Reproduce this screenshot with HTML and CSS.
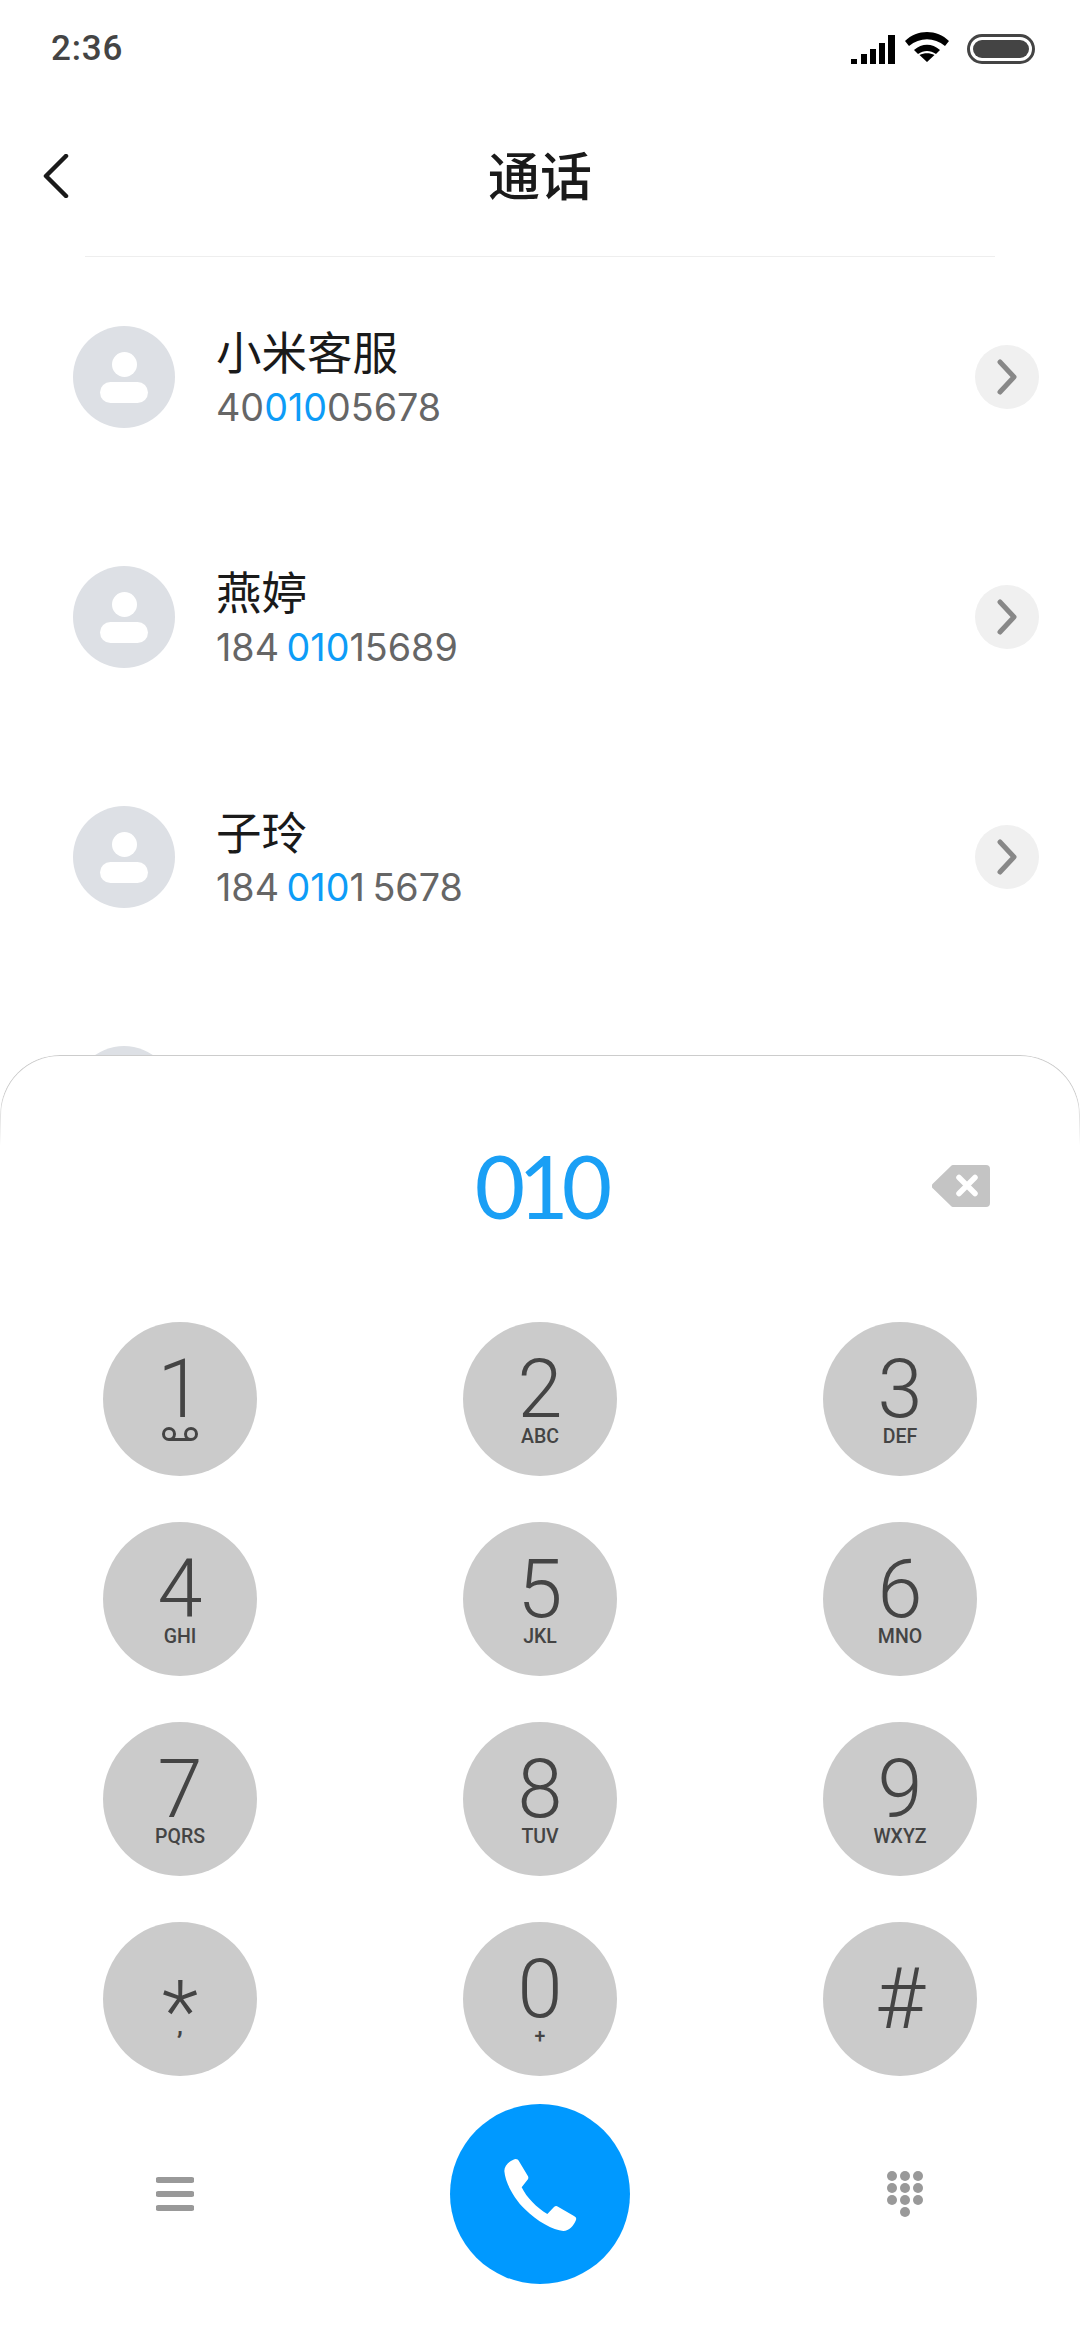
FILE: index.html
```html
<!DOCTYPE html>
<html lang="zh">
<head><meta charset="utf-8"><title>通话</title><link rel="stylesheet" href="styles.css"></head>
<body>
<div class="phone">
  <header class="status">
    <span class="time">2:36</span>
    <div class="status-icons">
      <svg class="i-signal" viewBox="0 0 44 29"><path d="M0 24h6v5H0zM10 19h6v10h-6zM19 14h6v15h-6zM28 8h6v21h-6zM37 0h7v29h-7z" fill="#000"/></svg>
      <svg class="i-wifi" viewBox="0 0 44 30"><path d="M0 9C12-3 32-3 44 9l-4 5C29 5 15 5 4 14z M9 18c8-7 18-7 26 0l-4 4c-6-4-12-4-18 0z M14.500 23c4.500-2.500 10.500-2.500 15 0L22 30z" fill="#000"/></svg>
      <svg class="i-batt" viewBox="0 0 68 30"><rect x="1.500" y="1.500" width="65" height="27" rx="13.500" fill="none" stroke="#444" stroke-width="3"/><rect x="6" y="6" width="56" height="18" rx="9" fill="#444"/></svg>
    </div>
  </header>
  <nav class="titlebar">
    <svg class="back" viewBox="0 0 26 44"><path d="M23 2 3 22l20 20" fill="none" stroke="#1a1a1a" stroke-width="4.500" stroke-linecap="round" stroke-linejoin="round"/></svg>
    <h1>通话</h1>
  </nav>
  <div class="rule"></div>
  <main class="list">
    <div class="row"><div class="avatar"><svg viewBox="0 0 102 102"><circle cx="51.500" cy="38.500" r="12.500" fill="#fff"/><rect x="27" y="56" width="48" height="21" rx="10.500" fill="#fff"/></svg></div>
      <div class="info"><div class="name">小米客服</div><div class="num">40<em>010</em>05678</div></div>
      <div class="go"><svg viewBox="0 0 20 36"><path d="M3 3l14 15L3 33" fill="none" stroke="#888" stroke-width="5" stroke-linecap="round" stroke-linejoin="round"/></svg></div></div>
    <div class="row"><div class="avatar"><svg viewBox="0 0 102 102"><circle cx="51.500" cy="38.500" r="12.500" fill="#fff"/><rect x="27" y="56" width="48" height="21" rx="10.500" fill="#fff"/></svg></div>
      <div class="info"><div class="name">燕婷</div><div class="num">184 <em>010</em>15689</div></div>
      <div class="go"><svg viewBox="0 0 20 36"><path d="M3 3l14 15L3 33" fill="none" stroke="#888" stroke-width="5" stroke-linecap="round" stroke-linejoin="round"/></svg></div></div>
    <div class="row"><div class="avatar"><svg viewBox="0 0 102 102"><circle cx="51.500" cy="38.500" r="12.500" fill="#fff"/><rect x="27" y="56" width="48" height="21" rx="10.500" fill="#fff"/></svg></div>
      <div class="info"><div class="name">子玲</div><div class="num">184 <em>010</em>1 5678</div></div>
      <div class="go"><svg viewBox="0 0 20 36"><path d="M3 3l14 15L3 33" fill="none" stroke="#888" stroke-width="5" stroke-linecap="round" stroke-linejoin="round"/></svg></div></div>
    <div class="row"><div class="avatar"></div></div>
  </main>
  <section class="sheet">
    <div class="dial">
      <span class="dialed">010</span>
      <svg class="del" viewBox="0 0 58 42"><path d="M21 0h33a4 4 0 0 1 4 4v34a4 4 0 0 1-4 4H21a3 3 0 0 1-2-1L1 23.500a3.500 3.500 0 0 1 0-5L19 1a3 3 0 0 1 2-1z" fill="#c4c4c4"/><path d="M27 12.500l16 16M43 12.500l-16 16" stroke="#fff" stroke-width="5.500" stroke-linecap="round"/></svg>
    </div>
    <div class="pad">
      <button class="key"><span class="d">1</span><svg class="vm" viewBox="0 0 36 14"><circle cx="7" cy="7" r="5.500" fill="none" stroke="#444" stroke-width="3"/><circle cx="29" cy="7" r="5.500" fill="none" stroke="#444" stroke-width="3"/><path d="M7 12.500h22" stroke="#444" stroke-width="3"/></svg></button>
      <button class="key"><span class="d">2</span><span class="s">ABC</span></button>
      <button class="key"><span class="d">3</span><span class="s">DEF</span></button>
      <button class="key"><span class="d">4</span><span class="s">GHI</span></button>
      <button class="key"><span class="d">5</span><span class="s">JKL</span></button>
      <button class="key"><span class="d">6</span><span class="s">MNO</span></button>
      <button class="key"><span class="d">7</span><span class="s">PQRS</span></button>
      <button class="key"><span class="d">8</span><span class="s">TUV</span></button>
      <button class="key"><span class="d">9</span><span class="s">WXYZ</span></button>
      <button class="key"><span class="d star">*</span><span class="s comma">,</span></button>
      <button class="key"><span class="d">0</span><span class="s">+</span></button>
      <button class="key"><span class="d hash">#</span></button>
    </div>
    <div class="actions">
      <svg class="menu" viewBox="0 0 38 34"><path d="M2.500 0h33a2.500 2.500 0 0 1 0 6h-33a2.500 2.500 0 0 1 0-6zM2.500 14h33a2.500 2.500 0 0 1 0 6h-33a2.500 2.500 0 0 1 0-6zM2.500 28h33a2.500 2.500 0 0 1 0 6h-33a2.500 2.500 0 0 1 0-6z" fill="#999"/></svg>
      <button class="call"><svg viewBox="0 0 300 300"><path d="M70 41C78 37 84 40 87 46L114 91C116 95 115 98 112 102L95 124C110 155 140 185 172 204L192 183C196 179 200 179 204 182L252 210C259 214 260 218 257 224C250 240 238 254 220 255C190 254 140 225 105 190C70 155 46 110 43 75C43 60 55 47 70 41Z" fill="#fff"/></svg></button>
      <svg class="dots" viewBox="0 0 36 46" fill="#999"><circle cx="5" cy="5" r="5"/><circle cx="18" cy="5" r="5"/><circle cx="31" cy="5" r="5"/><circle cx="5" cy="17" r="5"/><circle cx="18" cy="17" r="5"/><circle cx="31" cy="17" r="5"/><circle cx="5" cy="29" r="5"/><circle cx="18" cy="29" r="5"/><circle cx="31" cy="29" r="5"/><circle cx="18" cy="41" r="5"/></svg>
    </div>
  </section>
</div>
</body>
</html>
```
FILE: styles.css
```css
* { box-sizing: border-box; }
html, body { margin: 0; padding: 0; background: #fff; }
.phone { position: relative; width: 1080px; height: 2340px; overflow: hidden; background: #fff; font-family: Roboto, "Noto Sans CJK SC", sans-serif; }
.status { height: 96px; display: flex; align-items: center; justify-content: space-between; padding: 0 45px 0 51px; }
.time { font-size: 35px; font-weight: 500; color: #444; letter-spacing: 0.8px; }
.status-icons { display: flex; align-items: center; gap: 10px; }
.i-signal { width: 44px; height: 29px; margin-top: 2px; }
.i-wifi { width: 44px; height: 30px; margin-top: -2px; margin-right: 8px; }
.i-batt { width: 68px; height: 30px; margin-top: 2px; }
.titlebar { height: 160px; display: flex; align-items: center; justify-content: center; position: relative; }
.titlebar h1 { margin: 0; font-size: 52px; font-weight: 500; color: #1a1a1a; font-family: "Noto Sans CJK SC", sans-serif; line-height: 1; position: relative; top: -2px; }
.back { position: absolute; left: 43px; top: 58px; width: 26px; height: 44px; }
.rule { height: 1px; margin: 0 85px; background: #eee; }
.row { height: 240px; display: flex; align-items: center; padding: 0 41px 0 73px; }
.avatar { width: 102px; height: 102px; border-radius: 50%; background: #dde0e5; flex: none; }
.avatar svg { display: block; width: 102px; height: 102px; }
.info { margin-left: 41px; flex: 1; }
.name { font-size: 45.500px; line-height: 54px; color: #1a1a1a; font-family: "Noto Sans CJK SC", sans-serif; }
.num { font-family: Inter, Roboto, sans-serif; font-size: 37.700px; word-spacing: -3px; line-height: 50px; margin-top: 5px; color: #666; }
.num em { font-style: normal; color: #0d9cf7; }
.go { width: 64px; height: 64px; border-radius: 50%; background: #f0f0f0; display: flex; align-items: center; justify-content: center; }
.go svg { width: 20px; height: 36px; }
.sheet { position: absolute; left: 0; right: 0; top: 1055px; bottom: 0; background: #fff; border-radius: 60px 60px 0 0; }
.sheet::before { content: ""; position: absolute; left: 0; right: 0; top: 0; height: 90px; border: 1px solid #ccc; border-bottom: 0; border-radius: 60px 60px 0 0; -webkit-mask-image: linear-gradient(#000 40%, transparent); mask-image: linear-gradient(#000 40%, transparent); }
.dial { position: relative; height: 267px; display: flex; justify-content: center; padding-top: 78px; }
.dialed { font-family: Lato, sans-serif; font-weight: 400; font-size: 87px; line-height: 106px; color: #1a9ff5; letter-spacing: -7px; }
.del { position: absolute; left: 932px; top: 110px; width: 58px; height: 42px; }
.pad { display: grid; grid-template-columns: repeat(3, 154px); grid-auto-rows: 154px; row-gap: 46px; justify-content: space-between; padding: 0 103px; }
.key { border: 0; padding: 0; border-radius: 50%; background: #cbcbcb; color: #444; display: flex; flex-direction: column; align-items: center; font-family: Roboto, sans-serif; }
.d { font-family: Roboto, sans-serif; font-weight: 300; font-size: 81px; line-height: 64px; height: 64px; margin-top: 36px; }
.d.star { font-size: 85px; margin-top: 58px; height: 35px; }
.d.hash { font-size: 86px; margin-top: 45px; }
.s { font-family: Roboto, sans-serif; font-weight: 500; font-size: 19.500px; line-height: 22px; margin-top: 4px; }
.s.comma { font-size: 24px; font-weight: 700; margin-top: 0; }
.vm { width: 36px; height: 14px; margin-top: 5px; }
.actions { position: absolute; left: 0; right: 0; top: 1049px; height: 180px; display: flex; align-items: center; justify-content: center; }
.menu { position: absolute; left: 156px; top: 73px; width: 38px; height: 34px; }
.dots { position: absolute; left: 887px; top: 67px; width: 36px; height: 46px; }
.call { width: 180px; height: 180px; border-radius: 50%; border: 0; padding: 0; background: #0099ff; display: flex; align-items: center; justify-content: center; }
.call svg { width: 100px; height: 100px; margin-top: 4px; }
```
